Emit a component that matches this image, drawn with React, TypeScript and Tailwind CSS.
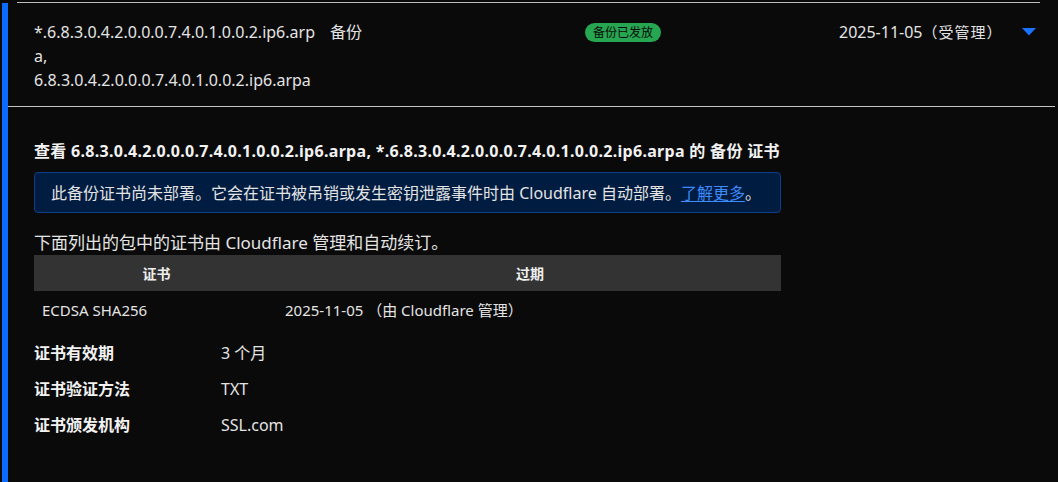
const domains = {
  wildcard: '*.6.8.3.0.4.2.0.0.0.7.4.0.1.0.0.2.ip6.arpa',
  apex: '6.8.3.0.4.2.0.0.0.7.4.0.1.0.0.2.ip6.arpa',
};

const details = [
  { label: '证书有效期', value: '3 个月' },
  { label: '证书验证方法', value: 'TXT' },
  { label: '证书颁发机构', value: 'SSL.com' },
];

const font = { fontFamily: '"Noto Sans", "Noto Sans CJK SC", sans-serif' };

export default function App() {
  return (
    <div className="h-[482px] w-[1058px] overflow-hidden bg-[#0a0a0a] text-[#e4e4e4]" style={font}>
      <div className="pt-[2px]">
        <div className="ml-[17px] h-px w-[1023px] bg-[#bdbdbd]" />
      </div>
      <div className="flex h-[479px]">
        <div className="ml-[2px] w-[6px] shrink-0 bg-[#0b6cff]" />
        <div className="mr-[3px] flex-1">
          {/* summary row */}
          <div className="flex h-[104px] items-start border-b border-[#c4c4c4] pl-[26px] pt-[17px] text-[16px] leading-[24px]">
            <div className="w-[285px] shrink-0">
              <div>
                {domains.wildcard.slice(0, -1)}
                <wbr />
                {domains.wildcard.slice(-1)},
              </div>
              <div>{domains.apex}</div>
            </div>
            <div className="w-[266px] shrink-0 pl-[11px]">备份</div>
            <div className="flex w-[254px] shrink-0 pt-[3px]">
              <span className="flex h-[19px] items-center rounded-full bg-[#26a650] px-[8px] text-[12px] leading-none text-[#0a0a0a]">
                备份已发放
              </span>
            </div>
            <div className="w-[183px] shrink-0">
              2025-11-05<span className="text-[15px] tracking-[1px]">（受管理）</span>
            </div>
            <div className="pt-[8px]">
              <svg width="14" height="8" viewBox="0 0 14 8">
                <path d="M0 0 H14 L7 7.5 Z" fill="#1a73ff" />
              </svg>
            </div>
          </div>

          {/* expanded detail */}
          <div className="pl-[26px]">
            <h3 className="mt-[33px] text-[16px] font-bold leading-[22px] tracking-[0.3px] text-[#f2f2f2]">
              查看 {domains.apex}, {domains.wildcard} 的 备份 证书
            </h3>
            <div className="mt-[10px] flex h-[41px] w-[747px] items-center rounded-[4px] border border-[#0c3f8a] bg-[#001c40] pl-[16px] text-[16px]">
              此备份证书尚未部署。它会在证书被吊销或发生密钥泄露事件时由 Cloudflare 自动部署。
              <a href="#" className="text-[#3b8cff] underline underline-offset-2">
                了解更多
              </a>
              。
            </div>
            <p className="mt-[19px] text-[17px] leading-[22px]">下面列出的包中的证书由 Cloudflare 管理和自动续订。</p>
            <table className="mt-px w-[747px] border-collapse text-[15px]">
              <thead>
                <tr className="h-[36px] bg-[#333333] text-[14px] font-bold text-[#eeeeee]">
                  <th className="w-[245px] text-center">证书</th>
                  <th className="text-center">过期</th>
                </tr>
              </thead>
              <tbody>
                <tr className="h-[38px]">
                  <td className="pl-[8px]">ECDSA SHA256</td>
                  <td className="pl-[6px]">2025-11-05 （由 Cloudflare 管理）</td>
                </tr>
              </tbody>
            </table>
            <dl className="mt-[6px]">
              {details.map(item => (
                <div key={item.label} className="flex h-[36px] items-center text-[16px]">
                  <dt className="w-[187px] font-bold text-[#f2f2f2]">{item.label}</dt>
                  <dd>{item.value}</dd>
                </div>
              ))}
            </dl>
          </div>
        </div>
      </div>
    </div>
  );
}
